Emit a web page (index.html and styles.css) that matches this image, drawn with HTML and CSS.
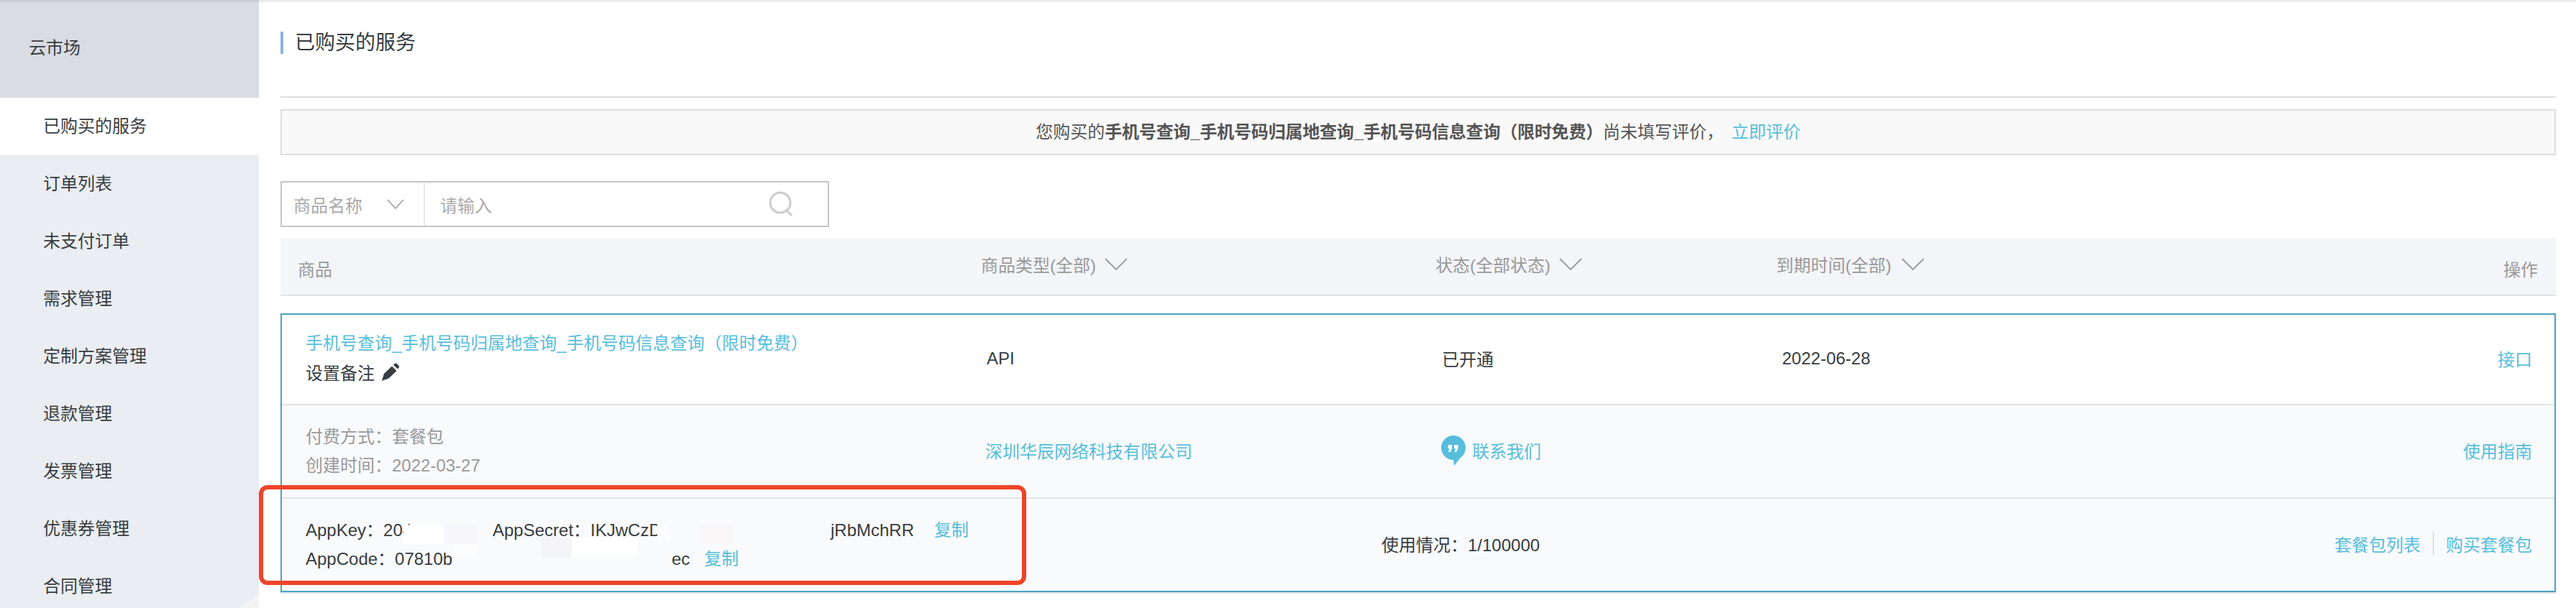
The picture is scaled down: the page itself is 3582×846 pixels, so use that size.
FILE: index.html
```html
<!DOCTYPE html>
<html lang="zh-CN">
<head>
    <meta charset="UTF-8">
    <title>已购买的服务</title>
    <link rel="stylesheet" href="styles.css">
</head>
<body>
    <div class="page">
        <div class="top-shadow"></div>
        <div class="side">
            <div class="side-head">云市场</div>
            <a href="#" class="side-item on">已购买的服务</a>
            <a href="#" class="side-item">订单列表</a>
            <a href="#" class="side-item">未支付订单</a>
            <a href="#" class="side-item">需求管理</a>
            <a href="#" class="side-item">定制方案管理</a>
            <a href="#" class="side-item">退款管理</a>
            <a href="#" class="side-item">发票管理</a>
            <a href="#" class="side-item">优惠券管理</a>
            <a href="#" class="side-item">合同管理</a>
            <div class="side-corner"></div>
        </div>
        <div class="main">
            <h1 class="title">已购买的服务</h1>
            <div class="line"></div>
            <div class="notice">
                您购买的<b>手机号查询_手机号码归属地查询_手机号码信息查询（限时免费）</b>尚未填写评价，
                <a href="#" class="link notice-link">立即评价</a>
            </div>
            <div class="search">
                <div class="search-type">
                    <span>商品名称</span>
                    <svg class="arrow-small" width="24" height="14" viewBox="0 0 24 14"><polyline points="1,1 12,13 23,1"/></svg>
                </div>
                <div class="search-input">
                    <span>请输入</span>
                    <svg class="search-icon" width="34" height="36" viewBox="0 0 34 36"><circle cx="16" cy="16" r="14"/><line x1="25" y1="27" x2="32" y2="34"/></svg>
                </div>
            </div>
            <div class="thead">
                <span class="th-first">商品</span>
                <span class="th-filter">商品类型(全部)<svg class="arrow-big" width="32" height="17" viewBox="0 0 32 17"><polyline points="1,1 16,16 31,1"/></svg></span>
                <span class="th-filter">状态(全部状态)<svg class="arrow-big" width="32" height="17" viewBox="0 0 32 17"><polyline points="1,1 16,16 31,1"/></svg></span>
                <span class="th-filter">到期时间(全部)<svg class="arrow-big" width="32" height="17" viewBox="0 0 32 17"><polyline points="1,1 16,16 31,1"/></svg></span>
                <span class="th-last">操作</span>
            </div>
            <div class="card">
                <div class="row row-top">
                    <div>
                        <div class="row-name"><a href="#" class="link">手机号查询_手机号码归属地查询_手机号码信息查询（限时免费）</a></div>
                        <div class="row-name">设置备注<svg class="pencil" width="26" height="26" viewBox="0 0 26 26"><path d="M1 25 L4 15 L15 4.5 L21.5 11 L10.5 21.5 Z"/><path d="M17 2.8 L18.8 1 Q20.3 0 21.8 1 L24.5 3.7 Q25.5 5.2 24.5 6.7 L23 8.6 Z"/></svg></div>
                    </div>
                    <div>API</div>
                    <div class="row-cjk">已开通</div>
                    <div>2022-06-28</div>
                    <div class="row-op row-cjk"><a href="#" class="link">接口</a></div>
                </div>
                <div class="row row-gray">
                    <div class="gray-text">
                        <div>付费方式：套餐包</div>
                        <div>创建时间：2022-03-27</div>
                    </div>
                    <div class="row-company row-cjk"><a href="#" class="link">深圳华辰网络科技有限公司</a></div>
                    <div class="contact row-cjk">
                        <svg class="bubble" width="34" height="42" viewBox="0 0 34 42"><circle cx="17" cy="17" r="17"/><path d="M17 33 L18 42 L30 27 Z"/><path class="quote" d="M9.5 13 H15 V18 L12.5 23 H10 L11.5 18 H9.5 Z"/><path class="quote" d="M18 13 H23.5 V18 L21 23 H18.5 L20 18 H18 Z"/></svg>
                        <a href="#" class="link">联系我们</a>
                    </div>
                    <div></div>
                    <div class="row-op row-cjk"><a href="#" class="link">使用指南</a></div>
                </div>
                <div class="row-keys">
                    <div class="keys">
                        <div class="key-line">
                            <span class="key-app">AppKey：204</span>
                            <span class="key-secret">AppSecret：IKJwCzD</span>
                            <span>jRbMchRR</span>
                            <a href="#" class="link copy-first">复制</a>
                        </div>
                        <div class="key-line">
                            <span class="key-code">AppCode：07810b</span>
                            <span>ec</span>
                            <a href="#" class="link copy-second">复制</a>
                        </div>
                    </div>
                    <div class="row-cjk">使用情况：1/100000</div>
                    <div class="key-ops row-cjk">
                        <a href="#" class="link">套餐包列表</a>
                        <i class="key-sep"></i>
                        <a href="#" class="link">购买套餐包</a>
                    </div>
                </div>
            </div>
        </div>
        <!-- 涂抹块和红框，盖在页面上面 -->
        <div class="patch patch-a"></div>
        <div class="patch patch-b"></div>
        <div class="patch patch-c"></div>
        <div class="patch patch-d"></div>
        <div class="patch patch-e"></div>
        <div class="patch patch-f"></div>
        <div class="patch patch-g"></div>
        <div class="red-box"></div>
    </div>
</body>
</html>
```

FILE: styles.css
```css
* {
    margin: 0; padding: 0; box-sizing: border-box; text-decoration: none;
}
html, body {
    height: 100%; overflow: hidden; background: #fff;
}
body {
    font-family: "Liberation Sans", "Noto Sans CJK SC", sans-serif; font-size: 24px; color: #373d41; font-weight: 400;
}
.page {
    display: flex; height: 846px; position: relative; overflow: hidden;
}
.top-shadow {
    position: absolute; top: 0; left: 0; right: 0; height: 5px; z-index: 3; background: linear-gradient(rgba(0,0,0,.1), rgba(0,0,0,0));
}
.link {
    color: #56bedc;
}

/* 左侧菜单 */
.side {
    width: 360px; flex: none; background: #eaedf1; position: relative;
}
.side-head {
    height: 136px; padding: 50px 0 0 40px; line-height: 34px; background: #d9dce1;
}
.side-item {
    display: block; height: 80px; line-height: 80px; padding-left: 60px; color: #373d41;
}
.side-item.on {
    background: #fff;
}
.side-corner {
    position: absolute; right: 0; top: 827px; width: 27px; height: 19px; background: #f4f4f5; clip-path: polygon(100% 0, 100% 100%, 0 100%);
}

/* 右侧内容 */
.main {
    flex: 1; min-width: 0; padding: 44px 28px 0 30px;
}
.title {
    font-size: 28px; font-weight: 400; line-height: 31px; padding-left: 16px; border-left: 4px solid #8db4dc; color: #373d41;
}
.line {
    height: 2px; margin-top: 59px; background: #ddd;
}
.notice {
    height: 64px; margin-top: 16px; border: 2px solid #ddd; background: #f9f9f9; line-height: 60px; text-align: center; color: #555;
}
.notice b {
    font-weight: 700; letter-spacing: -0.2px;
}
.notice-link {
    margin-left: 4px;
}
.search {
    display: flex; width: 763px; height: 64px; margin-top: 36px; border: 2px solid #c4c4c4; color: #aaa;
}
.search-type {
    display: flex; align-items: center; width: 199px; padding-left: 16px; border-right: 2px solid #e8e8e8;
}
.arrow-small {
    margin-left: 34px; fill: none; stroke: #999; stroke-width: 1.5;
}
.search-input {
    display: flex; flex: 1; align-items: center; padding-left: 21px; position: relative;
}
.search-icon {
    margin-left: auto; margin-right: 48px; fill: none; stroke: #ccc; stroke-width: 3;
}
.thead {
    display: grid; grid-template-columns: 974px 632px 474px 1fr auto; height: 80px; margin-top: 16px; padding: 2px 25px 0 0; background: #f3f5f9; border-bottom: 2px solid #e2e4e9; align-items: center; color: #999;
}
.th-first {
    padding-left: 24px; margin-top: 2px;
}
.th-last {
    margin-top: 2px;
}
.th-filter {
    display: flex; align-items: center; margin-top: -10px;
}
.arrow-big {
    margin-left: 12px; fill: none; stroke: #999; stroke-width: 1.8;
}
.th-filter:nth-child(4) .arrow-big {
    margin-left: 14px;
}
.card {
    margin-top: 24px; border: 2px solid #4aa3c1; box-shadow: 0 2px 0 #dfe3ea;
}
.row {
    display: grid; grid-template-columns: 947px 633px 473px 1fr auto; align-items: center; padding: 0 31px 2px 33px;
}
.row-top {
    height: 126px; border-bottom: 2px solid #e2e4e9;
}
.row-cjk {
    margin-top: -2px;
}
.row-name {
    line-height: 42px; white-space: nowrap;
}
.pencil {
    margin-left: 9px; vertical-align: -3px; fill: #373d41;
}
.row-gray {
    height: 130px; background: #f9fafc; border-bottom: 2px solid #e2e4e9;
}
.gray-text {
    line-height: 40px; color: #999; margin-bottom: -2px;
}
.row-company {
    margin-left: -2px;
}
.contact {
    display: flex; align-items: center; margin-left: -1px; gap: 9px;
}
.bubble {
    fill: #56bedc; margin-top: 2px;
}
.bubble .quote {
    fill: #fff;
}
.row-op {
    text-align: right;
}
.row-keys {
    display: flex; align-items: center; height: 128px; padding: 0 31px 2px 33px; background: #f9fafc;
}
.keys {
    flex: 0 0 1496px; margin-bottom: -2px;
}
.key-line {
    display: flex; height: 40px; line-height: 40px;
}
.key-app {
    width: 260px;
}
.key-secret {
    width: 470px;
}
.key-code {
    width: 509px;
}
.copy-first {
    margin-left: 28px;
}
.copy-second {
    margin-left: 20px;
}
.key-ops {
    display: flex; align-items: center; margin-left: auto;
}
.key-sep {
    width: 1px; height: 34px; margin: 0 17px; background: #ccc;
}

/* 截图上的涂抹块 */
.patch {
    position: absolute; z-index: 2;
}
.patch-a {
    left: 561px; top: 730px; width: 56px; height: 27px; background: #fff;
}
.patch-b {
    left: 617px; top: 730px; width: 46px; height: 27px; background: #f7f7fb;
}
.patch-c {
    left: 752px; top: 748px; width: 43px; height: 27px; background: #f5f5f7;
}
.patch-d {
    left: 795px; top: 748px; width: 91px; height: 27px; background: #fff;
}
.patch-e {
    left: 974px; top: 730px; width: 46px; height: 27px; background: #fbf6f8;
}
.patch-f {
    left: 630px; top: 757px; width: 33px; height: 18px; background: #fdfdfe;
}
.patch-g {
    left: 914px; top: 728px; width: 16px; height: 27px; background: #fcfcfe;
}
.red-box {
    position: absolute; z-index: 4; left: 360px; top: 675px; width: 1067px; height: 139px; border: 6px solid #ef4428; border-radius: 12px;
}
```
